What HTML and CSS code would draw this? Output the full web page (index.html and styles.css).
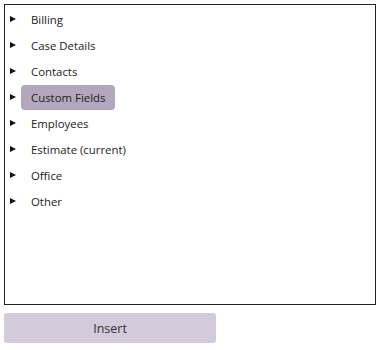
FILE: index.html
```html
<!DOCTYPE html>
<html lang="en">
  <head>
    <meta charset="UTF-8" />
    <title>Insert Field</title>
    <link rel="stylesheet" href="styles.css">
  </head>
  <body>
    <div class="panel">
      <ul class="tree">
        <li class="node"><span class="caret"></span><span class="label">Billing</span></li>
        <li class="node"><span class="caret"></span><span class="label">Case Details</span></li>
        <li class="node"><span class="caret"></span><span class="label">Contacts</span></li>
        <li class="node"><span class="caret"></span><span class="label selected">Custom Fields</span></li>
        <li class="node"><span class="caret"></span><span class="label">Employees</span></li>
        <li class="node"><span class="caret"></span><span class="label">Estimate (current)</span></li>
        <li class="node"><span class="caret"></span><span class="label">Office</span></li>
        <li class="node"><span class="caret"></span><span class="label">Other</span></li>
      </ul>
    </div>
    <button class="button">Insert</button>
  </body>
</html>
```

FILE: styles.css
```css
body {
  font-family: "Open Sans", "Noto Sans", sans-serif;
  font-size: 11.4px;
  color: #222;
  background-color: white;
  margin: 0;
  padding: 4px;
}
.panel {
  width: 370px;
  height: 299px;
  border: 1px solid #222;
}
.tree {
  list-style: none;
  margin: 0;
  padding: 1px 0 0 0;
}
.node {
  display: flex;
  align-items: center;
  height: 26px;
}
.caret {
  width: 0;
  height: 0;
  margin-left: 5px;
  margin-right: 5px;
  border-top: 3.5px solid transparent;
  border-bottom: 3.5px solid transparent;
  border-left: 6px solid #111;
}
.label {
  display: flex;
  align-items: center;
  height: 25px;
  padding: 0 10px;
  border-radius: 4px;
}
.label.selected {
  background-color: #b4a7bd;
}
.button {
  display: block;
  width: 212px;
  height: 30px;
  margin-top: 8px;
  background-color: #d3cadb;
  border: none;
  border-radius: 3px;
  font-family: inherit;
  font-size: 12.5px;
  color: #333;
}
```
